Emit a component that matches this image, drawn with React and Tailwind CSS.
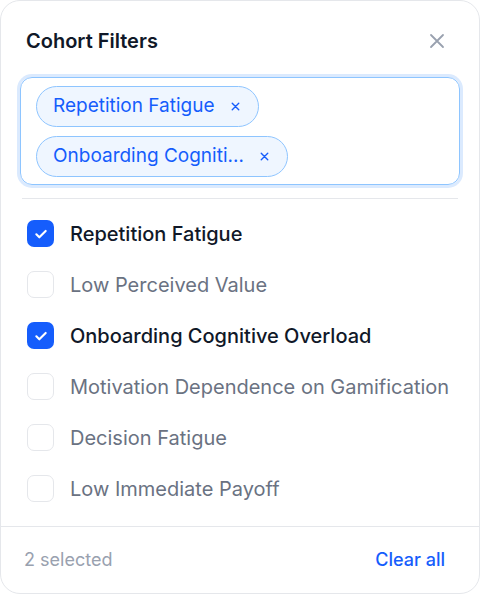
import React, { useState } from "react";

const OPTIONS = [
  "Repetition Fatigue",
  "Low Perceived Value",
  "Onboarding Cognitive Overload",
  "Motivation Dependence on Gamification",
  "Decision Fatigue",
  "Low Immediate Payoff",
];

function XIcon({ className, strokeWidth = 2 }) {
  return (
    <svg viewBox="0 0 24 24" fill="none" stroke="currentColor" strokeWidth={strokeWidth} strokeLinecap="round" className={className}>
      <path d="M6 6l12 12M18 6L6 18" />
    </svg>
  );
}

function CheckIcon({ className }) {
  return (
    <svg viewBox="0 0 24 24" fill="none" stroke="currentColor" strokeWidth={3.2} strokeLinecap="round" strokeLinejoin="round" className={className}>
      <path d="M5 12.5l4.5 4.5L19 7.5" />
    </svg>
  );
}

export default function App() {
  const [selected, setSelected] = useState([
    "Repetition Fatigue",
    "Onboarding Cognitive Overload",
  ]);

  const toggle = (name) => {
    setSelected((prev) =>
      prev.includes(name) ? prev.filter((s) => s !== name) : [...prev, name]
    );
  };

  return (
    <div className="w-[480px] h-[595px] bg-white font-['Inter',sans-serif]">
      <div className="h-[594px] flex flex-col rounded-[20px] border border-gray-200 bg-white">
        {/* Header */}
        <div className="flex items-center justify-between pl-[25px] pr-[30px] pt-[26px]">
          <h2 className="text-[20px] leading-7 font-semibold text-gray-900">Cohort Filters</h2>
          <button className="text-gray-400">
            <XIcon className="w-6 h-6" strokeWidth={1.8} />
          </button>
        </div>

        {/* Selected chips */}
        <div className="mx-[19px] mt-[22px] rounded-xl border border-blue-300 ring-[3px] ring-blue-100 px-[15px] pt-[8px] pb-[7px] flex flex-wrap gap-[9px]">
          {selected.map((name) => (
            <span
              key={name}
              className="h-[41px] inline-flex items-center gap-[14px] rounded-full border border-blue-300 bg-blue-50 pl-4 pr-4 text-[19px] text-blue-600"
            >
              <span className="max-w-[191px] truncate">{name}</span>
              <button onClick={() => toggle(name)} className="text-blue-600">
                <XIcon className="w-[13px] h-[13px]" strokeWidth={2.6} />
              </button>
            </span>
          ))}
        </div>

        {/* Options */}
        <div className="mx-[21px] mt-[13px] border-t border-gray-200 pt-[9px] flex-1">
          {OPTIONS.map((name) => {
            const checked = selected.includes(name);
            return (
              <label key={name} className="h-[51px] flex items-center gap-4 pl-[5px] cursor-pointer">
                <span
                  onClick={() => toggle(name)}
                  className={
                    checked
                      ? "w-[27px] h-[27px] shrink-0 rounded-[7px] bg-blue-600 text-white flex items-center justify-center"
                      : "w-[27px] h-[27px] shrink-0 rounded-[7px] border border-gray-200 bg-white"
                  }
                >
                  {checked && <CheckIcon className="w-4 h-4" />}
                </span>
                <span
                  className={
                    checked
                      ? "text-[20px] font-medium text-gray-900 whitespace-nowrap"
                      : "text-[20px] text-gray-500 whitespace-nowrap"
                  }
                >
                  {name}
                </span>
              </label>
            );
          })}
        </div>

        {/* Footer */}
        <div className="h-[67px] border-t border-gray-200 flex items-center justify-between pl-[23px] pr-[22px] pb-[2px]">
          <span className="text-[18px] text-gray-400">{selected.length} selected</span>
          <button onClick={() => setSelected([])} className="px-3 text-[18px] font-medium text-blue-600">
            Clear all
          </button>
        </div>
      </div>
    </div>
  );
}
